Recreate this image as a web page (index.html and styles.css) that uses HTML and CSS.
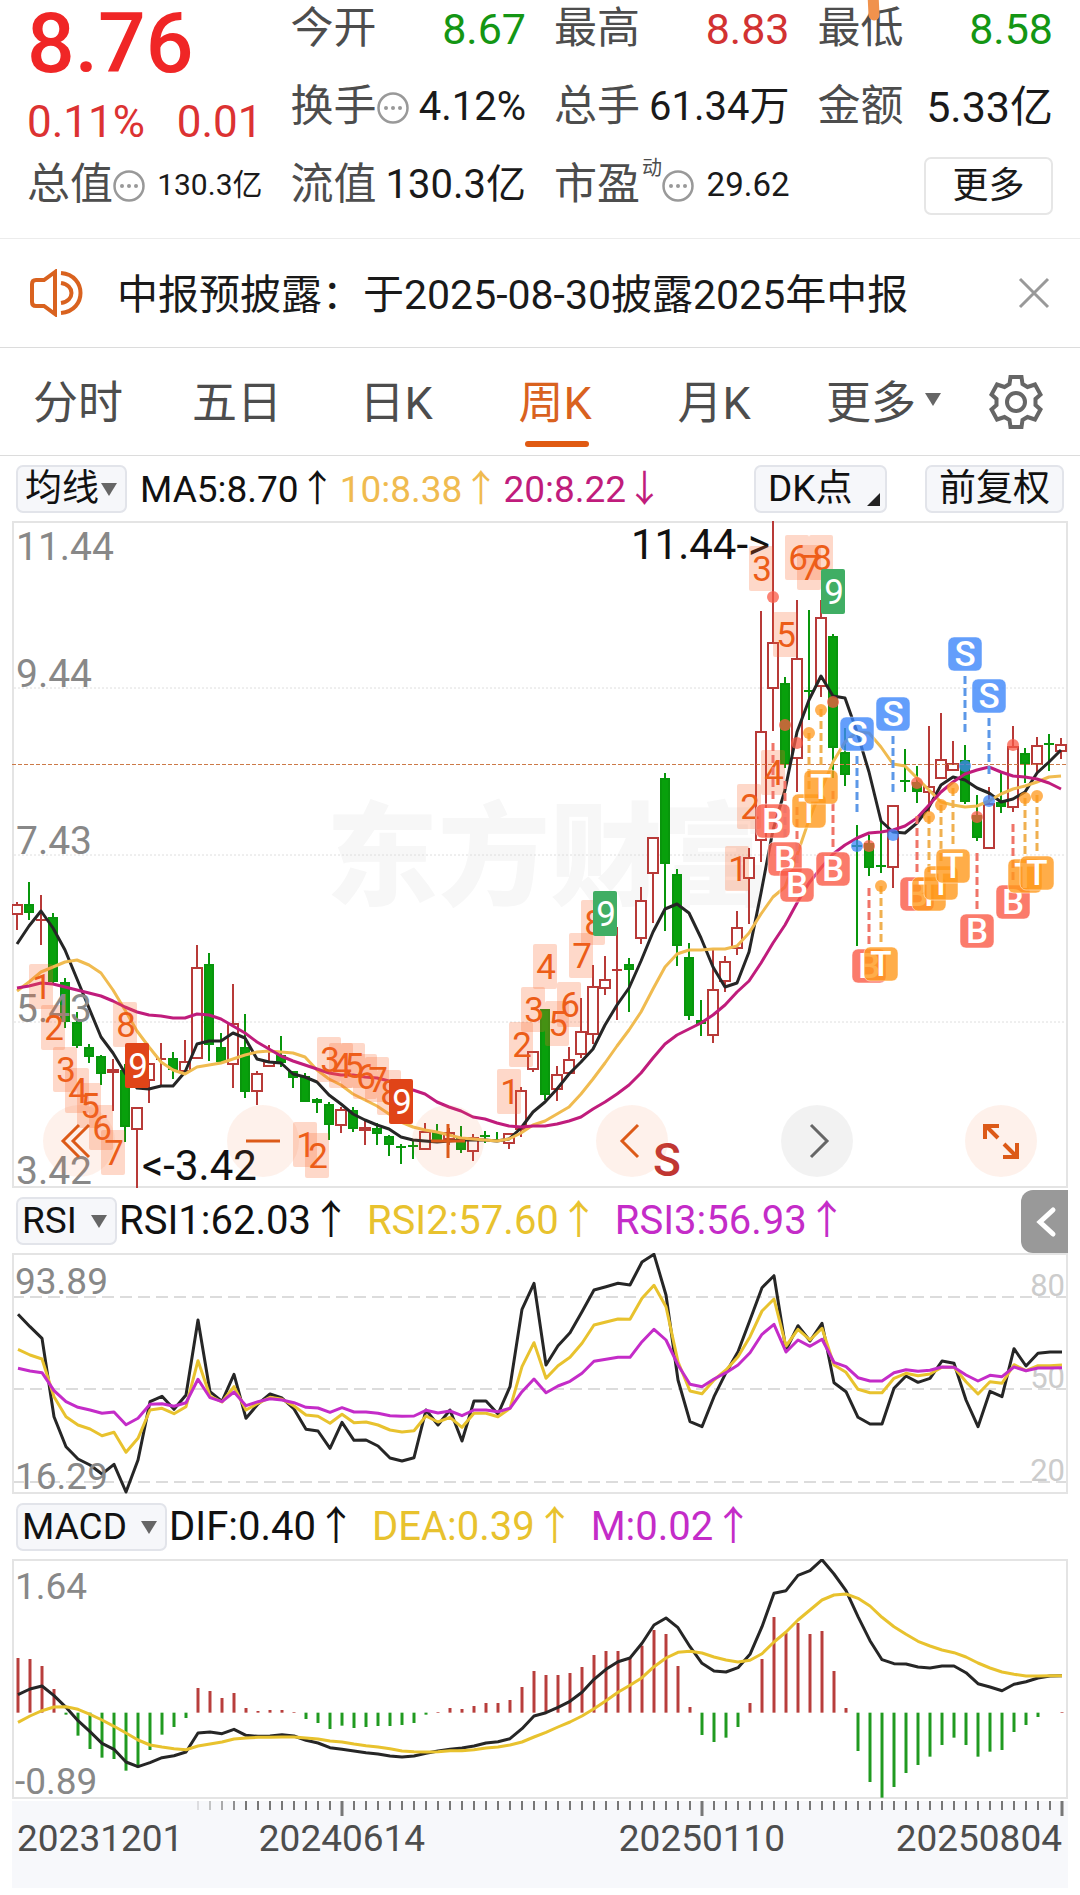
FILE: index.html
```html
<!DOCTYPE html>
<html lang="zh-CN">
<head>
<meta charset="utf-8">
<meta name="viewport" content="width=device-width, initial-scale=1">
<title>周K 行情</title>
<link rel="stylesheet" href="styles.css">
</head>
<body>
<header class="quote">
  <svg class="marker" viewBox="0 0 14 22" aria-hidden="true"><path d="M6 -6 L7 15" stroke="#f0924d" stroke-width="11" stroke-linecap="round"/></svg>
  <div class="summary">
    <strong class="price">8.76</strong>
    <div class="change"><span>0.11%</span><span>0.01</span></div>
    <div class="cell">
      <span class="name">总值</span><svg class="info" viewBox="0 0 32 32"><use href="#dots"/></svg>
      <span class="value small">130.3亿</span>
    </div>
  </div>
  <div class="cell"><span class="name">今开</span><span class="value large down">8.67</span></div>
  <div class="cell"><span class="name">最高</span><span class="value large up">8.83</span></div>
  <div class="cell"><span class="name">最低</span><span class="value large down">8.58</span></div>
  <div class="cell"><span class="name">换手</span><svg class="info" viewBox="0 0 32 32"><use href="#dots"/></svg><span class="value">4.12%</span></div>
  <div class="cell"><span class="name">总手</span><span class="value">61.34万</span></div>
  <div class="cell"><span class="name">金额</span><span class="value large">5.33亿</span></div>
  <div class="cell"><span class="name">流值</span><span class="value">130.3亿</span></div>
  <div class="cell"><span class="name">市盈<sup>动</sup></span><svg class="info" viewBox="0 0 32 32"><use href="#dots"/></svg><span class="value medium">29.62</span></div>
  <div class="cell end"><button class="more" type="button">更多</button></div>
</header>

<section class="notice">
  <svg class="speaker" viewBox="0 0 54 48" aria-hidden="true">
    <path d="M25 3 L14 11 H6 Q2 11 2 15 V33 Q2 37 6 37 H14 L25 45 Z"/>
    <path d="M31 4 C57 6 57 42 31 44 M31 14 C45 16 45 32 31 34"/>
  </svg>
  <p>中报预披露：于2025-08-30披露2025年中报</p>
  <button class="close" type="button" aria-label="关闭"><svg viewBox="0 0 32 32"><path d="M2 2 L30 30 M30 2 L2 30"/></svg></button>
</section>

<nav class="tabs">
  <a href="#">分时</a>
  <a href="#">五日</a>
  <a href="#">日K</a>
  <a href="#" class="active" aria-current="page">周K</a>
  <a href="#">月K</a>
  <button type="button" class="more-tab">更多<i class="triangle"></i></button>
  <button type="button" class="gear" aria-label="设置">
    <svg viewBox="0 0 54 54"><path d="M21.500 2 H32.500 L33.500 9 L38.500 12 L46 9.500 L51.500 19.500 L46.500 24 V30 L51.500 34.500 L46 44.500 L38.500 42 L33.500 45 L32.500 52 H21.500 L20.500 45 L15.500 42 L8 44.500 L2.500 34.500 L7.500 30 V24 L2.500 19.500 L8 9.500 L15.500 12 L20.500 9 Z"/><circle cx="27" cy="27" r="9"/></svg>
  </button>
</nav>

<main>
  <div class="toolbar">
    <label class="picker ma"><select aria-label="主图指标"><option>均线</option></select><i class="triangle"></i></label>
    <div class="readout first">
      <span>MA5:8.70<b>↑</b></span><span class="ma10">10:8.38<b>↑</b></span><span class="ma20">20:8.22<b>↓</b></span>
    </div>
    <button type="button" class="chip dk">DK点<i class="corner"></i></button>
    <button type="button" class="chip">前复权</button>
  </div>
  <div class="panel">
    <svg id="kline" viewBox="12 521 1056 667" role="img" aria-label="周K线图"></svg>
    <div class="controls">
      <button type="button" aria-label="最早"><svg viewBox="0 0 72 72"><path d="M36 20 L20 36 L36 52 M46 20 L30 36 L46 52"/></svg></button>
      <button type="button" aria-label="缩小"><svg viewBox="0 0 72 72"><path d="M19 36 H53"/></svg></button>
      <button type="button" aria-label="放大"><svg viewBox="0 0 72 72"><path d="M19 36 H53 M36 19 V53"/></svg></button>
      <button type="button" aria-label="左移"><svg viewBox="0 0 72 72"><path d="M42 20 L26 36 L42 52"/></svg></button>
      <button type="button" aria-label="右移" class="muted"><svg viewBox="0 0 72 72"><path d="M30 20 L46 36 L30 52"/></svg></button>
      <button type="button" aria-label="全屏"><svg viewBox="0 0 72 72"><path class="heavy" d="M20 34 V21 H34 M21 21 L33 33 M38 52 H52 V38 M39 39 L51 51"/></svg></button>
    </div>
  </div>

  <div class="toolbar">
    <label class="picker"><select aria-label="副图一"><option>RSI</option></select><i class="triangle"></i></label>
    <div class="readout">
      <span>RSI1:62.03<b>↑</b></span><span class="gold">RSI2:57.60<b>↑</b></span><span class="violet">RSI3:56.93<b>↑</b></span>
    </div>
    <button type="button" class="drawer" aria-label="展开"><svg viewBox="0 0 47 63"><path d="M32 20 L19 32 L32 44"/></svg></button>
  </div>
  <div class="panel"><svg id="rsi" viewBox="12 1253 1056 241" role="img" aria-label="RSI"></svg></div>

  <div class="toolbar">
    <label class="picker wide"><select aria-label="副图二"><option>MACD</option></select><i class="triangle"></i></label>
    <div class="readout">
      <span>DIF:0.40<b>↑</b></span><span class="gold">DEA:0.39<b>↑</b></span><span class="violet">M:0.02<b>↑</b></span>
    </div>
  </div>
  <div class="panel"><svg id="macd" viewBox="12 1559 1056 240" role="img" aria-label="MACD"></svg></div>
  <div class="panel axis"><svg id="dates" viewBox="12 1801 1056 87" role="img" aria-label="日期"></svg></div>
</main>

<svg class="defs" aria-hidden="true">
  <symbol id="dots" viewBox="0 0 32 32"><circle cx="16" cy="16" r="14.500" fill="none" stroke="#999" stroke-width="2.500"/><g fill="#999"><circle cx="9" cy="16" r="2"/><circle cx="16" cy="16" r="2"/><circle cx="23" cy="16" r="2"/></g></symbol>
</svg>
<script src="chart.js"></script>
</body>
</html>
```

FILE: styles.css
```css
* { box-sizing: border-box; }

body {
  margin: 0;
  background: #fff;
  color: #1a1a1a;
  font-family: Roboto, "Noto Sans CJK SC", sans-serif;
}

button, select {
  font: inherit;
  color: inherit;
  margin: 0;
  padding: 0;
  border: 0;
  background: none;
}

svg { display: block; }
.defs { position: absolute; width: 0; height: 0; }

.quote {
  position: relative;
  display: grid;
  grid-template-columns: repeat(4, 1fr);
  grid-template-rows: repeat(3, 60px);
  gap: 18px 28px;
  padding: 0 27px 22px;
  border-bottom: 1px solid #ececec;
}
.marker { position: absolute; left: 81%; top: 0; width: 14px; height: 22px; margin-left: -8px; z-index: 1; }
.summary {
  grid-row: 1 / 4;
  display: flex;
  flex-direction: column;
  justify-content: space-between;
}
.price { font-size: 84px; line-height: 88px; font-weight: 500; color: #f02626; }
.change { display: flex; justify-content: space-between; font-size: 44px; line-height: 66px; color: #dc3232; }
.cell { display: flex; align-items: center; height: 60px; white-space: nowrap; }
.name { padding-bottom: 4px; font-size: 43px; line-height: 56px; color: #4d4d4d; }
.name sup { font-size: 20px; line-height: 20px; vertical-align: 24px; margin-left: 2px; }
.value { margin-left: auto; padding-bottom: 2px; font-size: 40px; line-height: 58px; }
.large { font-size: 43px; }
.medium { font-size: 33px; }
.small { font-size: 30px; }
.up { color: #d23232; }
.down { color: #149614; }
.info { width: 32px; height: 32px; flex: none; }
.end { justify-content: flex-end; }
.more { width: 129px; height: 58px; font-size: 36px; line-height: 52px; border: 2px solid #e6e6e6; border-radius: 7px; }

.notice {
  display: flex;
  align-items: center;
  height: 109px;
  padding: 0 30px;
  border-bottom: 1px solid #dcdcdc;
}
.notice p { flex: 1; margin: 0 0 0 33px; padding-bottom: 4px; font-size: 41px; white-space: nowrap; }
.speaker { width: 54px; height: 48px; fill: none; stroke: #d9621f; stroke-width: 4; }
.close svg { width: 32px; height: 32px; fill: none; stroke: #999; stroke-width: 3; }

.tabs {
  display: grid;
  grid-template-columns: repeat(5, 159fr) 180fr 82fr 23fr;
  height: 108px;
  border-bottom: 1px solid #dcdcdc;
  font-size: 45px;
  color: #4d4d4d;
}
.tabs a, .tabs button { display: flex; align-items: center; justify-content: center; color: inherit; text-decoration: none; white-space: nowrap; }
.tabs a, .tabs .more-tab { padding: 0 3px 4px 0; }
.tabs .active { position: relative; color: #d9621f; }
.active::after {
  content: "";
  position: absolute;
  left: calc(50% - 32px);
  bottom: 8px;
  width: 64px;
  height: 6px;
  border-radius: 3px;
  background: #e05a12;
}
.more-tab { gap: 9px; }
.gear svg { width: 54px; height: 54px; fill: none; stroke: #666; stroke-width: 4; }

.triangle { border: 8px solid transparent; border-top: 13px solid #666; border-bottom: 0; }

.toolbar {
  position: relative;
  display: flex;
  align-items: center;
  height: 65px;
  padding: 0 16px;
  color: #111;
}
.picker, .chip {
  position: relative;
  flex: none;
  height: 48px;
  border: 2px solid #e2e4ea;
  border-radius: 7px;
  background: #f6f7fa;
  font-size: 37px;
}
.picker { width: 101px; }
.picker.ma { width: 111px; }
.picker.wide { width: 151px; }
.picker select { appearance: none; width: 100%; height: 42px; padding-left: 4px; line-height: 42px; }
.picker.ma select { padding-left: 7px; }
.picker .triangle { position: absolute; right: 8px; top: 16px; pointer-events: none; }
.chip { width: 139px; margin-left: 38px; line-height: 40px; }
.dk { display: flex; align-items: center; width: 133px; margin-left: auto; padding-left: 12px; }
.corner { position: absolute; right: 5px; bottom: 5px; border-left: 13px solid transparent; border-bottom: 13px solid #222; }

.readout { display: flex; gap: 16px; margin-left: 2px; font-size: 40px; white-space: nowrap; }
.readout b { font-family: "Noto Sans CJK SC", sans-serif; font-weight: 400; line-height: 40px; }
.readout.first { gap: 4px; margin-left: 13px; font-size: 37px; }
.ma10 { color: #f0bb50; }
.ma20 { color: #c01c7c; }
.gold { color: #e8c22e; }
.violet { color: #c42cc8; }

.drawer { position: absolute; right: 12px; top: 2px; width: 47px; height: 63px; border-radius: 12px 0 0 12px; background: #999; }
.drawer path { fill: none; stroke: #fff; stroke-width: 5; stroke-linecap: round; }

.panel { position: relative; margin: 0 12px; }
.panel > svg { width: 100%; height: auto; }
.axis { margin-top: 2px; margin-bottom: 7px; background: #f7f8fb; }

.controls {
  position: absolute;
  left: 31px;
  right: 31px;
  bottom: 11px;
  display: flex;
  justify-content: space-between;
}
.controls button { width: 72px; height: 72px; border-radius: 50%; background: rgba(250, 120, 60, .1); }
.controls .muted { background: rgba(0, 0, 0, .05); }
.controls path { fill: none; stroke: #dc5a18; stroke-width: 3; }
.controls .heavy { stroke-width: 4; }
.controls .muted path { stroke: #666; }

/* chart drawing */
.frame { fill: none; stroke: #e4e4e4; stroke-width: 2; }
.grid { stroke: #dedede; stroke-width: 1; stroke-dasharray: 2 2; }
.level { stroke: #dcdcdc; stroke-width: 2; stroke-dasharray: 12 6; }
.last { stroke: #cc7a48; stroke-width: 1; stroke-dasharray: 4 2; }
.wick { stroke-width: 2; }
.rise { stroke: #b83a38; stroke-width: 2; fill: #fff; }
.fall { stroke: #08960c; stroke-width: 2; fill: #08a00c; }
.line { fill: none; stroke-width: 3; stroke-linejoin: round; }
.black { stroke: #262626; }
.yellow { stroke: #f0bb50; }
.magenta { stroke: #c01c7c; }
.line.gold { stroke: #e8c22e; }
.line.violet { stroke: #c42cc8; }
.scale { fill: #888; font-size: 39px; }
.sub { font-size: 37px; }
.faint { fill: #ccc; font-size: 31px; text-anchor: end; }
.date { fill: #4d4d4d; font-size: 37px; }
.extreme { fill: #111; font-size: 42px; }
.exit { fill: #c03632; font-size: 46px; font-weight: 500; }
.watermark { fill: #f7f7f7; font-size: 112px; font-weight: 900; }
.td rect { fill: #fa6428; fill-opacity: .25; }
.td text, .mark text { text-anchor: middle; font-size: 35px; fill: #ec5d18; }
.td.buy rect { fill: #e04418; fill-opacity: 1; }
.td.sell rect { fill: #40ae64; fill-opacity: 1; }
.td.buy text, .td.sell text, .mark text { fill: #fff; }
.mark text { font-weight: 500; }
.mark rect { stroke: #fff; stroke-opacity: .5; stroke-width: 1; fill-opacity: .8; }
.mark line { stroke-width: 3; stroke-dasharray: 8 4; }
.B { fill: #fa5a46; stroke: #f07468; }
.T { fill: #ff981c; stroke: #f0b050; }
.S { fill: #3c86fa; stroke: #5c98e8; }
.mark .dot { stroke: none; fill-opacity: .75; }
```

FILE: chart.js
```js
const NS = 'http://www.w3.org/2000/svg';

function add(parent, tag, attrs, text) {
  const el = document.createElementNS(NS, tag);
  for (const key in attrs) el.setAttribute(key, attrs[key]);
  if (text !== undefined) el.textContent = text;
  parent.appendChild(el);
  return el;
}

const kx = i => 17 + 12 * i;
const sx = i => 18 + 12 * i;

function polyline(svg, values, x, y, cls) {
  add(svg, 'polyline', { class: 'line ' + cls, points: values.map((v, i) => x(i) + ',' + y(v).toFixed(1)).join(' ') });
}

// Weekly candles: colour, high, body top, body bottom, low
const candles = `r902 904 915 930,g882 904 913 920,r895 920 921 945,g913 917 982 983,g978 982 1022 1028,g1012 1022 1046 1048,g1044 1047 1057 1063,g1055 1056 1074 1085,r1059 1069 1073 1111,g1064 1070 1127 1142,r1107 1107 1130 1189,r1063 1063 1081 1103,r1043 1059 1060 1085,g1052 1058 1070 1079,r1040 1061 1072 1072,r945 967 1059 1059,g953 964 1045 1061,g1033 1047 1062 1062,r984 1023 1065 1088,g1014 1047 1092 1098,r1071 1073 1092 1105,r1045 1061 1067 1067,g1036 1055 1063 1067,g1071 1071 1078 1088,g1073 1076 1102 1102,g1098 1099 1103 1113,g1102 1104 1125 1140,r1107 1109 1126 1133,g1107 1110 1129 1132,r1120 1127 1131 1145,g1123 1128 1134 1145,g1135 1136 1145 1156,g1144 1147 1148 1164,g1141 1146 1147 1159,r1123 1131 1150 1150,g1124 1132 1142 1142,r1128 1132 1140 1145,g1126 1138 1150 1153,r1134 1137 1152 1161,g1131 1136 1137 1143,g1132 1140 1141 1142,r1133 1133 1144 1149,r1087 1090 1130 1137,r1051 1051 1070 1072,g1009 1009 1095 1100,r1066 1074 1090 1101,r1047 1059 1074 1074,r998 1031 1055 1058,r965 986 1035 1044,r956 979 989 995,r927 970 971 1020,g958 964 970 1012,r887 900 939 944,r837 837 874 923,g773 778 864 931,g869 874 946 966,g943 957 1016 1020,g1000 1020 1024 1036,r950 989 1036 1043,r956 961 982 992,r911 927 949 955,r848 857 879 924,r611 731 841 862,r521 642 689 731,g677 683 765 768,r600 658 759 792,g610 691 692 720,r600 617 687 697,g634 636 748 778,g728 752 775 786,g825 846 847 946,g835 843 868 876,g822 866 867 873,r805 805 868 888,g749 781 782 792,g766 782 792 803,r726 786 793 812,r713 759 779 779,r741 763 771 771,g745 760 802 804,g795 815 838 841,r787 803 849 849,g772 802 807 813,r726 746 808 812,g748 753 764 783,r737 745 765 773,g734 744 745 771,r738 744 752 759`
  .split(',').map(s => [s[0], ...s.slice(1).split(' ').map(Number)]);

const nums = s => s.split(' ').map(Number);
const ma5 = nums('944 926 911 928 950 979 1008 1037 1053 1073 1088 1089 1086 1086 1072 1044 1041 1041 1033 1038 1059 1062 1063 1074 1077 1082 1095 1104 1114 1120 1125 1129 1137 1140 1141 1142 1141 1140 1140 1140 1141 1139 1128 1112 1102 1089 1074 1062 1049 1025 1005 988 961 932 909 904 913 938 967 987 983 952 893 830 790 732 700 676 696 698 732 772 821 832 833 823 807 785 777 780 788 793 802 799 792 773 762 750');
const ma10 = nums('991 982 972 967 962 960 965 973 990 1010 1031 1047 1062 1070 1074 1067 1065 1063 1059 1055 1052 1051 1052 1053 1057 1070 1079 1085 1094 1100 1106 1114 1122 1127 1130 1132 1135 1138 1139 1140 1141 1139 1133 1125 1121 1114 1107 1094 1079 1063 1046 1030 1012 989 967 954 950 950 949 949 946 933 914 897 887 855 820 790 762 742 732 733 747 764 766 778 790 802 805 807 806 801 794 789 786 782 777 776');
const ma20 = nums('988 986 983 984 987 990 993 996 1001 1007 1012 1015 1016 1018 1018 1014 1015 1019 1026 1033 1042 1049 1056 1061 1065 1069 1073 1075 1075 1077 1078 1081 1085 1090 1094 1102 1107 1111 1117 1119 1123 1126 1127 1126 1126 1124 1121 1117 1109 1102 1094 1085 1073 1058 1044 1035 1029 1023 1015 1005 992 981 963 943 925 903 883 868 854 845 838 833 832 830 826 818 805 792 782 774 770 767 772 776 777 779 783 789');

const k = document.getElementById('kline');
add(k, 'text', { class: 'watermark', x: 326, y: 897 }, '东方财富');
for (const y of [688, 855, 1022]) add(k, 'line', { class: 'grid', x1: 14, x2: 1066, y1: y, y2: y });
add(k, 'rect', { class: 'frame', x: 13, y: 522, width: 1054, height: 665 });

candles.forEach(([c, high, top, bottom, low], i) => {
  const cls = c === 'r' ? 'rise' : 'fall';
  const x = kx(i);
  add(k, 'line', { class: 'wick ' + cls, x1: x, x2: x, y1: high, y2: low });
  if (bottom - top < 2) add(k, 'line', { class: cls, x1: x - 5, x2: x + 5, y1: top, y2: top });
  else add(k, 'rect', { class: cls, x: x - (c === 'r' ? 5 : 4), y: top + 1, width: c === 'r' ? 10 : 8, height: Math.max(1, bottom - top - 2) });
});
add(k, 'line', { class: 'last', x1: 12, x2: 1068, y1: 764.5, y2: 764.5 });

polyline(k, ma5, kx, v => v, 'black');
polyline(k, ma10, kx, v => v, 'yellow');
polyline(k, ma20, kx, v => v, 'magenta');

for (const [label, y] of [['11.44', 560], ['9.44', 687], ['7.43', 854], ['5.43', 1022], ['3.42', 1184]]) {
  add(k, 'text', { class: 'scale', x: 16, y }, label);
}
add(k, 'text', { class: 'extreme', x: 770, y: 559, 'text-anchor': 'end' }, '11.44->');
add(k, 'text', { class: 'extreme', x: 142, y: 1180 }, '<-3.42');

// Nine-count labels: candle index, top, digit, variant
const counts = [[2, 964, 1], [3, 1005, 2], [4, 1047, 3], [5, 1068, 4], [6, 1083, 5], [7, 1105, 6], [8, 1130, 7], [9, 1002, 8], [10, 1043, 9, 'buy'],
  [24, 1122, 1], [25, 1133, 2], [26, 1037, 3], [27, 1043, 4], [28, 1043, 5], [29, 1054, 6], [30, 1057, 7], [31, 1070, 8], [32, 1079, 9, 'buy'],
  [41, 1069, 1], [42, 1022, 2], [43, 987, 3], [44, 944, 4], [45, 1001, 5], [46, 982, 6], [47, 933, 7], [48, 900, 8], [49, 891, 9, 'sell'],
  [60, 846, 1], [61, 784, 2], [62, 546, 3], [63, 750, 4], [64, 612, 5], [65, 535, 6], [66, 545, 7], [67, 535, 8], [68, 569, 9, 'sell']];
for (const [i, top, digit, variant] of counts) {
  const g = add(k, 'g', { class: 'td ' + (variant || '') });
  add(g, 'rect', { x: kx(i) - 12, y: top, width: 24, height: 45, rx: 2 });
  add(g, 'text', { x: kx(i) + 1, y: top + 35 }, digit);
}

// Trade marks: letter, candle index, badge centre, dot centre
const marks = [['B', 63, 821, 597], ['B', 64, 859, 725], ['B', 65, 885, 743], ['B', 68, 869, 702], ['B', 71, 966, 846], ['B', 75, 894, 783], ['B', 80, 931, 817], ['B', 83, 902, 745],
  ['T', 66, 811, 733], ['T', 67, 787, 710], ['T', 72, 964, 886], ['T', 76, 894, 817], ['T', 77, 883, 805], ['T', 78, 866, 788], ['T', 84, 876, 798], ['T', 85, 873, 796],
  ['S', 70, 734, 846], ['S', 73, 714, 835], ['S', 79, 654, 766], ['S', 81, 696, 801]];
for (const [letter, i, y, dot] of marks) {
  const g = add(k, 'g', { class: 'mark' });
  const x = kx(i);
  const dir = letter === 'S' ? 1 : -1;
  add(g, 'line', { class: letter, x1: x, x2: x, y1: y + dir * 22, y2: y + dir * 78 });
  add(g, 'circle', { class: letter + ' dot', cx: x, cy: dot, r: 6 });
  add(g, 'rect', { class: letter, x: x - 17, y: y - 17, width: 34, height: 34, rx: 6 });
  add(g, 'text', { x, y: y + 12 }, letter);
}
add(k, 'text', { class: 'exit', x: 653, y: 1176 }, 'S');

const rsi1 = nums('373 410 445 680 770 807 825 852 823 906 810 635 619 658 615 390 605 634 553 685 642 612 624 657 718 723 775 697 751 750 768 804 813 803 660 705 660 753 633 633 672 590 358 280 525 467 428 365 300 290 280 285 216 193 315 570 695 710 620 548 485 390 293 257 480 407 453 400 578 605 682 702 702 595 558 577 565 513 520 630 710 604 620 476 528 490 486 486');
const rsi2 = nums('478 495 507 620 680 705 717 737 727 787 745 660 655 671 650 512 618 636 590 660 640 622 628 648 675 679 700 673 698 696 705 720 726 722 678 696 682 712 670 670 680 655 530 458 565 527 502 460 405 396 387 388 325 286 350 515 603 611 570 540 500 440 363 327 468 418 450 415 525 547 598 608 608 565 550 557 552 532 532 575 612 575 580 524 542 527 527 525');
const rsi3 = nums('535 543 548 602 635 652 660 670 666 704 685 643 641 649 638 568 623 635 606 647 635 626 630 638 652 654 667 653 666 666 670 677 679 678 661 669 663 677 660 660 665 655 605 567 608 588 574 550 514 508 502 502 455 418 450 525 583 590 567 548 525 488 433 403 486 450 469 448 517 530 563 573 573 548 539 544 541 531 532 555 573 556 560 531 542 534 534 533');

const r = document.getElementById('rsi');
const ry = v => 1190 + v / 3;
for (const y of [1297, 1389, 1482]) add(r, 'line', { class: 'level', x1: 12, x2: 1068, y1: y, y2: y });
for (const [label, y] of [['80', 1296], ['50', 1388], ['20', 1481]]) add(r, 'text', { class: 'faint', x: 1065, y }, label);
add(r, 'rect', { class: 'frame', x: 13, y: 1254, width: 1054, height: 239 });
polyline(r, rsi1, sx, ry, 'black');
polyline(r, rsi2, sx, ry, 'gold');
polyline(r, rsi3, sx, ry, 'violet');
add(r, 'text', { class: 'scale sub', x: 15, y: 1294 }, '93.89');
add(r, 'text', { class: 'scale sub', x: 15, y: 1489 }, '16.29');

const bars = nums('474 477 498 567 644 707 747 773 777 812 803 750 704 681 654 564 573 594 579 624 633 630 630 636 657 669 687 677 684 681 678 678 675 669 644 636 624 627 618 609 609 600 561 513 525 525 519 501 465 453 453 472 437 390 402 498 621 705 726 713 681 609 477 351 399 369 402 393 513 624 753 846 893 861 819 795 770 735 713 735 770 755 750 696 675 651 638 636');
const dif = nums('584 567 558 587 622 662 695 730 748 786 800 788 773 767 756 699 696 701 688 706 709 708 704 708 721 729 743 748 753 758 762 768 771 768 760 753 748 744 738 729 725 716 686 648 638 622 604 577 538 508 485 474 430 375 354 383 440 490 513 516 503 463 380 280 272 226 212 179 222 272 350 422 479 491 492 501 504 498 498 518 551 561 572 553 545 534 528 527');
const dea = nums('667 648 632 621 620 628 643 660 679 699 720 735 741 746 749 738 732 726 717 714 712 712 711 711 714 717 723 726 732 737 741 746 753 755 756 755 752 752 749 744 741 735 726 711 697 681 666 648 626 602 577 556 533 500 474 457 454 459 471 480 486 481 461 426 396 360 330 300 285 282 295 318 352 380 403 424 438 450 458 471 489 504 516 523 528 528 527 527');

const m = document.getElementById('macd');
const my = v => 1500 + v / 3;
add(m, 'rect', { class: 'frame', x: 13, y: 1560, width: 1054, height: 238 });
bars.forEach((v, i) => {
  if (v !== 638) add(m, 'line', { 'stroke-width': 3, stroke: v < 638 ? '#b83e3c' : '#209a20', x1: sx(i), x2: sx(i), y1: my(638), y2: my(v) });
});
polyline(m, dif, sx, my, 'black');
polyline(m, dea, sx, my, 'gold');
add(m, 'text', { class: 'scale sub', x: 15, y: 1599 }, '1.64');
add(m, 'text', { class: 'scale sub', x: 15, y: 1794 }, '-0.89');

const d = document.getElementById('dates');
for (let i = 15; i < 88; i++) {
  const major = i === 27 || i === 57 || i === 87;
  add(d, 'line', { stroke: '#777', 'stroke-width': major ? 3 : 2, opacity: Math.min(1, (i - 14) / 5), x1: sx(i), x2: sx(i), y1: 1801, y2: major ? 1816 : 1810 });
}
for (const [label, x, anchor] of [['20231201', 17, 'start'], ['20240614', 342, 'middle'], ['20250110', 702, 'middle'], ['20250804', 1062, 'end']]) {
  add(d, 'text', { class: 'date', x, y: 1851, 'text-anchor': anchor }, label);
}
```
